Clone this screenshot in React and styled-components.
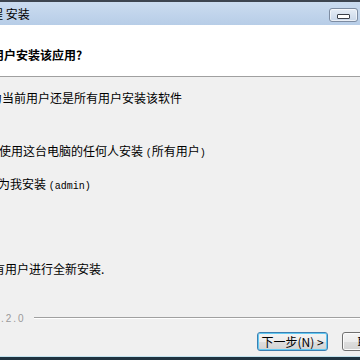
import React from 'react';
import styled, { createGlobalStyle } from 'styled-components';

const GlobalStyle = createGlobalStyle`
  html, body {
    margin: 0;
    padding: 0;
    overflow: hidden;
    background: #f0f0f0;
  }
  body {
    font-family: "Noto Sans CJK SC", "Liberation Sans", sans-serif;
    color: #000;
  }
`;

const Window = styled.div`
  width: 360px;
  height: 360px;
  box-sizing: border-box;
  overflow: hidden;
  display: flex;
  flex-direction: column;
  background: #f0f0f0;
  border-top: 2px solid #3d4550;
`;

const TitleBar = styled.div`
  flex: none;
  height: 23px;
  display: flex;
  justify-content: space-between;
  align-items: flex-start;
  background: linear-gradient(#cbdcf0, #b7cde7);
`;

const Title = styled.span`
  margin-left: -21px;
  font-size: 12px;
  line-height: 23px;
  white-space: nowrap;
`;

const MinButton = styled.div`
  flex: none;
  width: 29px;
  height: 14px;
  margin: 6px 2px 0 0;
  box-sizing: border-box;
  display: flex;
  align-items: center;
  justify-content: center;
  border: 1px solid #7d8ca2;
  border-radius: 3px;
  background: linear-gradient(#e6edf6, #c9d7e9);
  box-shadow: inset 0 0 0 1px rgba(255, 255, 255, 0.6);
`;

const Dash = styled.span`
  width: 11px;
  height: 3px;
  border: 1px solid #3a3f48;
  border-radius: 1px;
  background: #fff;
  margin-top: 2px;
`;

const Header = styled.div`
  flex: none;
  height: 52px;
  box-sizing: border-box;
  padding-top: 22px;
  background: #fff;
  border-bottom: 1px solid #a0a0a0;
`;

const Heading = styled.div`
  margin-left: -8px;
  font-size: 12px;
  font-weight: bold;
  line-height: 16px;
  white-space: nowrap;
`;

const Body = styled.div`
  flex: 1;
  display: flex;
  flex-direction: column;
`;

const Line = styled.div`
  margin-top: ${p => p.$top}px;
  margin-left: ${p => p.$indent}px;
  font-size: 12px;
  line-height: 16px;
  white-space: nowrap;
`;

const Mono = styled.span`
  font-family: "Liberation Mono", monospace;
  font-size: 10px;
`;

const VersionRow = styled.div`
  margin-top: 33px;
  height: 16px;
  display: flex;
  align-items: center;
  gap: 8px;
`;

const Version = styled.span`
  margin-left: 1px;
  font-family: "Liberation Sans", sans-serif;
  font-size: 10px;
  letter-spacing: 2px;
  color: #9a9a9a;
  white-space: nowrap;
`;

const Rule = styled.div`
  flex: 1;
  height: 0;
  border-top: 1px solid #a0a0a0;
  border-bottom: 1px solid #fff;
`;

const ButtonRow = styled.div`
  margin-top: 6px;
  padding-left: 257px;
  display: flex;
  gap: 14px;
`;

const Button = styled.button`
  flex: none;
  width: 71px;
  height: 19px;
  box-sizing: border-box;
  padding: 0;
  font-family: "Noto Sans CJK SC", sans-serif;
  font-size: 12px;
  line-height: 15px;
  color: #000;
  white-space: nowrap;
  border: 1px solid ${p => (p.$primary ? '#3c7fb1' : '#707070')};
  border-radius: 3px;
  background: linear-gradient(#f4f4f4, #ececec 50%, #dedede 50%, #d3d3d3);
  box-shadow: inset 0 0 0 1px ${p => (p.$primary ? '#62c9f2' : '#fbfbfb')};
`;

const Frame = styled.div`
  margin-top: auto;
  height: 1px;
  background: #c3e3ee;
  border-bottom: 3px solid #1f3340;
`;

export default function App() {
  return (
    <>
      <GlobalStyle />
      <Window>
        <TitleBar>
          <Title>日程 安装</Title>
          <MinButton>
            <Dash />
          </MinButton>
        </TitleBar>
        <Header>
          <Heading>用户安装该应用?</Heading>
        </Header>
        <Body>
          <Line $top={13} $indent={-10}>为当前用户还是所有用户安装该软件</Line>
          <Line $top={37} $indent={-1}>
            使用这台电脑的任何人安装 <Mono>(</Mono>所有用户<Mono>)</Mono>
          </Line>
          <Line $top={14} $indent={-2}>
            为我安装 <Mono>(admin)</Mono>
          </Line>
          <Line $top={66} $indent={-7}>有用户进行全新安装.</Line>
          <VersionRow>
            <Version>.2.0</Version>
            <Rule />
          </VersionRow>
          <ButtonRow>
            <Button $primary>下一步(N) &gt;</Button>
            <Button>取消(C)</Button>
          </ButtonRow>
          <Frame />
        </Body>
      </Window>
    </>
  );
}
